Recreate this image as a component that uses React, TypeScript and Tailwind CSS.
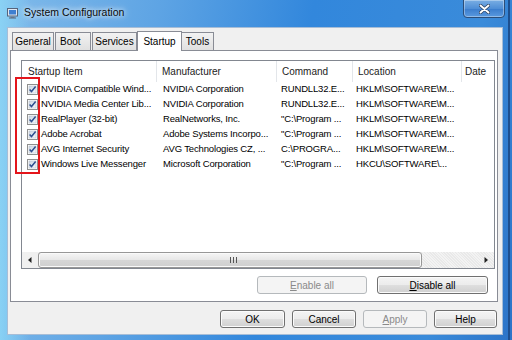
import React from "react";

const CheckBox = () => (
  <svg width="11" height="11" viewBox="0 0 11 11" className="shrink-0">
    <defs>
      <linearGradient id="cbg" x1="0" y1="0" x2="1" y2="1">
        <stop offset="0" stopColor="#cbd6e4" />
        <stop offset="1" stopColor="#f6f9fc" />
      </linearGradient>
    </defs>
    <rect x="0.5" y="0.5" width="10" height="10" fill="#ffffff" stroke="#8f8f8f" />
    <rect x="2" y="2" width="7" height="7" fill="url(#cbg)" stroke="#b7c0cb" strokeWidth="0.6" />
    <path d="M2.6 5.4 L4.5 7.6 L8.6 2.6" fill="none" stroke="#2f4f8f" strokeWidth="1.5" />
  </svg>
);

const rows = [
  ["NVIDIA Compatible Wind...", "NVIDIA Corporation", "RUNDLL32.E...", "HKLM\\SOFTWARE\\M..."],
  ["NVIDIA Media Center Lib...", "NVIDIA Corporation", "RUNDLL32.E...", "HKLM\\SOFTWARE\\M..."],
  ["RealPlayer (32-bit)", "RealNetworks, Inc.", "\"C:\\Program ...", "HKLM\\SOFTWARE\\M..."],
  ["Adobe Acrobat", "Adobe Systems Incorpo...", "\"C:\\Program ...", "HKLM\\SOFTWARE\\M..."],
  ["AVG Internet Security", "AVG Technologies CZ, ...", "C:\\PROGRA...", "HKLM\\SOFTWARE\\M..."],
  ["Windows Live Messenger", "Microsoft Corporation", "\"C:\\Program ...", "HKCU\\SOFTWARE\\..."],
];

const Btn = ({ children, w, disabled }: { children: React.ReactNode; w: string; disabled?: boolean }) => (
  <div
    className={
      disabled
        ? `${w} h-[18px] flex items-center justify-center rounded-[3px] border border-[#b5b9bc] bg-[#f4f4f4] text-[#8a8a8a]`
        : `${w} h-[18px] flex items-center justify-center rounded-[3px] border border-[#707070] bg-[linear-gradient(to_bottom,#f4f4f4_0%,#ececec_48%,#dedede_52%,#d0d0d0_100%)] shadow-[inset_0_0_0_1px_#fbfbfb] text-black`
    }
  >
    {children}
  </div>
);

export default function App() {
  return (
    <div className="w-[512px] h-[340px] overflow-hidden font-['Liberation_Sans',Arial,sans-serif] text-[10px] text-black bg-[linear-gradient(to_right,rgba(140,214,246,0.85)_0%,rgba(140,214,246,0)_6%),linear-gradient(100deg,#80bbea_0%,#5ea4e4_28%,#3287dc_55%,#3a8bda_85%,#2c74c8_100%)]">
      <div className="w-[510px] h-[340px] border-r-2 border-[#1d4f8f] relative">
        {/* title bar */}
        <div className="h-[27px] flex items-center pl-[7px] pb-[1px]">
          <svg width="11" height="11" viewBox="0 0 11 11" className="mr-[6px]">
            <rect x="0.5" y="0.5" width="10" height="7.5" fill="#dfe8f2" stroke="#56647a" />
            <rect x="2" y="2" width="7" height="4.5" fill="#3f7fd0" />
            <rect x="3.5" y="8.5" width="4" height="1.5" fill="#7b8798" />
            <rect x="2" y="9.5" width="7" height="1" fill="#56647a" />
          </svg>
          <span className="text-[10.5px] text-[#0a0a0a] [text-shadow:0_0_5px_#ffffff,0_0_8px_rgba(255,255,255,0.8)]">System Configuration</span>
        </div>
        {/* close button */}
        <div className="absolute top-[-1px] left-[463px] w-[42px] h-[19px] rounded-b-[4px] border border-[#2c4d78] shadow-[inset_0_0_0_1px_rgba(255,255,255,0.35)] bg-[linear-gradient(to_bottom,#7aaee3_0%,#4f8ed6_50%,#3a7ccc_52%,#5a9ae0_100%)] flex items-center justify-center">
          <svg width="11" height="10" viewBox="0 0 11 10">
            <path d="M1.5 1.5 L9.5 8.5 M9.5 1.5 L1.5 8.5" stroke="#2b3f5c" strokeWidth="3.4" strokeLinecap="round" />
            <path d="M1.5 1.5 L9.5 8.5 M9.5 1.5 L1.5 8.5" stroke="#ffffff" strokeWidth="1.9" strokeLinecap="round" />
          </svg>
        </div>

        {/* client area */}
        <div className="ml-[7px] w-[496px] h-[308px] bg-[#f0f0f0] border border-[#a7bdd6] flex flex-col">
          {/* tabs */}
          <div className="h-[22px] flex items-end pl-[4px] relative z-10">
            <div className="w-[42px] h-[18px] flex items-center justify-center border border-b-0 border-[#898c95] bg-[linear-gradient(to_bottom,#f2f2f2,#e0e0e0)]">General</div>
            <div className="w-[36px] h-[18px] ml-[1px] flex items-center pl-[4px] border border-b-0 border-[#898c95] bg-[linear-gradient(to_bottom,#f2f2f2,#e0e0e0)]">Boot</div>
            <div className="w-[45px] h-[18px] ml-[1px] flex items-center justify-center border border-b-0 border-[#898c95] bg-[linear-gradient(to_bottom,#f2f2f2,#e0e0e0)]">Services</div>
            <div className="w-[45px] h-[20px] mb-[-1px] flex items-center justify-center pb-[1px] border border-b-0 border-[#898c95] bg-white">Startup</div>
            <div className="w-[32px] h-[18px] flex items-center justify-center border border-b-0 border-l-0 border-[#898c95] bg-[linear-gradient(to_bottom,#f2f2f2,#e0e0e0)]">Tools</div>
          </div>

          {/* tab panel */}
          <div className="ml-[2px] w-[488px] h-[252px] bg-white border border-[#898c95] relative flex flex-col">
            {/* list view */}
            <div className="ml-[10px] mt-[9px] w-[474px] h-[209px] border border-[#828790] bg-white flex flex-col text-[9.5px] tracking-[-0.15px]">
              {/* header */}
              <div className="h-[21px] flex text-[#222] shrink-0 text-[10px] tracking-normal">
                <div className="w-[135px] pl-[6px] flex items-center border-r border-[#e3e6ea]">Startup Item</div>
                <div className="w-[120px] pl-[5px] flex items-center border-r border-[#e3e6ea]">Manufacturer</div>
                <div className="w-[76px] pl-[5px] flex items-center border-r border-[#e3e6ea]">Command</div>
                <div className="w-[109px] pl-[5px] flex items-center border-r border-[#e3e6ea]">Location</div>
                <div className="flex-1 pl-[3px] flex items-center overflow-hidden">Date</div>
              </div>
              {/* rows */}
              <div className="flex-1 flex flex-col">
                {rows.map((r, i) => (
                  <div key={i} className="h-[15px] flex items-center whitespace-nowrap">
                    <div className="w-[135px] pl-[5px] flex items-center gap-[3px] overflow-hidden">
                      <CheckBox />
                      <span>{r[0]}</span>
                    </div>
                    <div className="w-[120px] pl-[6px] overflow-hidden">{r[1]}</div>
                    <div className="w-[76px] pl-[4px] overflow-hidden">{r[2]}</div>
                    <div className="w-[109px] pl-[3px] overflow-hidden">{r[3]}</div>
                    <div className="flex-1" />
                  </div>
                ))}
              </div>
              {/* horizontal scrollbar */}
              <div className="h-[16px] flex items-stretch shrink-0 bg-[#f0f0f0] bg-[repeating-linear-gradient(45deg,#f3f3f3_0px,#f3f3f3_1px,#e9e9e9_1px,#e9e9e9_2px)]">
                <div className="w-[16px] flex items-center justify-center bg-[#f0f0f0]">
                  <svg width="4" height="6" viewBox="0 0 4 6"><path d="M3.5 0 L0 3 L3.5 6 Z" fill="#222" /></svg>
                </div>
                <div className="w-[384px] rounded-[3px] border border-[#979797] bg-[linear-gradient(to_bottom,#f6f6f6_0%,#e7e7e7_50%,#d6d6d6_52%,#cfcfcf_100%)] shadow-[inset_0_0_0_1px_#fafafa] flex items-center justify-center pl-[6px]">
                  <svg width="7" height="6" viewBox="0 0 7 6">
                    <path d="M0.5 0 V6 M3.5 0 V6 M6.5 0 V6" stroke="#555" strokeWidth="1" />
                  </svg>
                </div>
                <div className="flex-1" />
                <div className="w-[16px] flex items-center justify-center">
                  <svg width="4" height="6" viewBox="0 0 4 6"><path d="M0.5 0 L4 3 L0.5 6 Z" fill="#222" /></svg>
                </div>
              </div>
            </div>

            {/* enable / disable buttons */}
            <div className="mt-[7px] flex justify-end gap-[10px] pr-[9px]">
              <Btn w="w-[110px]" disabled>
                <span><span className="underline">E</span>nable all</span>
              </Btn>
              <Btn w="w-[111px]">
                <span><span className="underline">D</span>isable all</span>
              </Btn>
            </div>

            {/* red highlight */}
            <div className="absolute left-[4px] top-[26px] w-[25px] h-[97px] border-2 border-[#e4151b]" />
          </div>

          {/* bottom buttons */}
          <div className="mt-[8px] flex justify-end gap-[7px] pr-[5px]">
            <Btn w="w-[65px]">OK</Btn>
            <Btn w="w-[64px]">Cancel</Btn>
            <Btn w="w-[64px]" disabled>
              <span><span className="underline">A</span>pply</span>
            </Btn>
            <Btn w="w-[63px]">Help</Btn>
          </div>
        </div>
      </div>
    </div>
  );
}
